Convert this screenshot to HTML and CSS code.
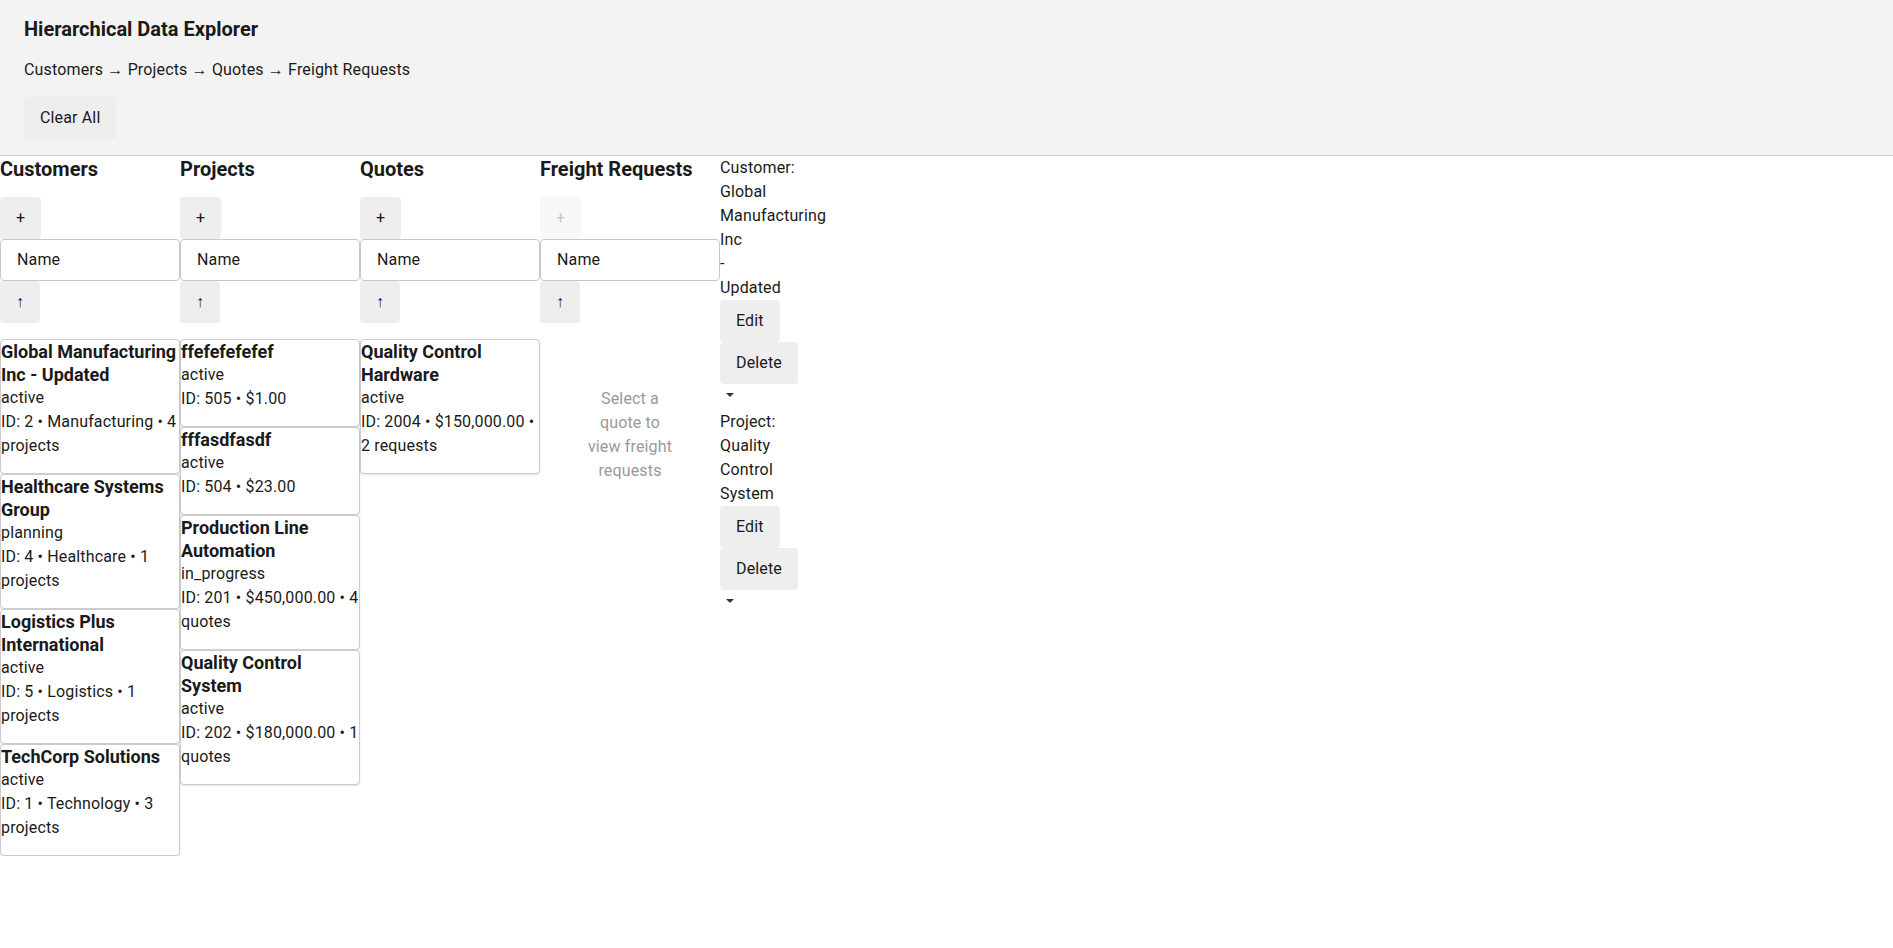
FILE: index.html
```html
<!DOCTYPE html>
<html lang="en">
<head>
<meta charset="utf-8">
<title>Hierarchical Data Explorer</title>
<link rel="stylesheet" href="styles.css">
</head>
<body>
<header class="topbar">
  <h1 class="title">Hierarchical Data Explorer</h1>
  <p class="crumbs">Customers → Projects → Quotes → Freight Requests</p>
  <button class="btn">Clear All</button>
</header>
<main class="explorer">
  <section class="col">
    <h2 class="col-title">Customers</h2>
    <button class="btn">+</button>
    <div class="sort-field">Name</div>
    <button class="btn">↑</button>
    <div class="list">
      <div class="card">
        <div class="card-title">Global Manufacturing Inc - Updated</div>
        <div class="card-line">active</div>
        <div class="card-line">ID: 2 • Manufacturing • 4 projects</div>
      </div>
      <div class="card">
        <div class="card-title">Healthcare Systems Group</div>
        <div class="card-line">planning</div>
        <div class="card-line">ID: 4 • Healthcare • 1 projects</div>
      </div>
      <div class="card">
        <div class="card-title">Logistics Plus International</div>
        <div class="card-line">active</div>
        <div class="card-line">ID: 5 • Logistics • 1 projects</div>
      </div>
      <div class="card">
        <div class="card-title">TechCorp Solutions</div>
        <div class="card-line">active</div>
        <div class="card-line">ID: 1 • Technology • 3 projects</div>
      </div>
    </div>
  </section>
  <section class="col">
    <h2 class="col-title">Projects</h2>
    <button class="btn">+</button>
    <div class="sort-field">Name</div>
    <button class="btn">↑</button>
    <div class="list">
      <div class="card">
        <div class="card-title">ffefefefefef</div>
        <div class="card-line">active</div>
        <div class="card-line">ID: 505 • $1.00</div>
      </div>
      <div class="card">
        <div class="card-title">fffasdfasdf</div>
        <div class="card-line">active</div>
        <div class="card-line">ID: 504 • $23.00</div>
      </div>
      <div class="card">
        <div class="card-title">Production Line Automation</div>
        <div class="card-line">in_progress</div>
        <div class="card-line">ID: 201 • $450,000.00 • 4 quotes</div>
      </div>
      <div class="card">
        <div class="card-title">Quality Control System</div>
        <div class="card-line">active</div>
        <div class="card-line">ID: 202 • $180,000.00 • 1 quotes</div>
      </div>
    </div>
  </section>
  <section class="col">
    <h2 class="col-title">Quotes</h2>
    <button class="btn">+</button>
    <div class="sort-field">Name</div>
    <button class="btn">↑</button>
    <div class="list">
      <div class="card">
        <div class="card-title">Quality Control Hardware</div>
        <div class="card-line">active</div>
        <div class="card-line">ID: 2004 • $150,000.00 • 2 requests</div>
      </div>
    </div>
  </section>
  <section class="col">
    <h2 class="col-title">Freight Requests</h2>
    <button class="btn" disabled>+</button>
    <div class="sort-field">Name</div>
    <button class="btn">↑</button>
    <div class="list">
      <div class="empty">Select a quote to view freight requests</div>
    </div>
  </section>
  <aside class="details">
    <div class="detail">
      <div class="detail-label">Customer: Global Manufacturing Inc - Updated</div>
      <button class="btn">Edit</button>
      <button class="btn">Delete</button>
      <div class="caret"><svg width="8" height="4" viewBox="0 0 8 4"><path d="M0 0H8L4 4Z" fill="#333"/></svg></div>
    </div>
    <div class="detail">
      <div class="detail-label">Project: Quality Control System</div>
      <button class="btn">Edit</button>
      <button class="btn">Delete</button>
      <div class="caret"><svg width="8" height="4" viewBox="0 0 8 4"><path d="M0 0H8L4 4Z" fill="#333"/></svg></div>
    </div>
  </aside>
</main>
</body>
</html>
```

FILE: styles.css
```css
html, body {
  margin: 0;
  padding: 0;
  background: #ffffff;
}

body {
  font-family: Roboto, "Liberation Sans", sans-serif;
  font-size: 16px;
  line-height: 24px;
  letter-spacing: 0.15px;
  color: #1a1a1a;
}

.topbar {
  background: #f3f3f3;
  padding: 16px 24px 16px;
  border-bottom: 1px solid #cccccc;
  display: flex;
  flex-direction: column;
  align-items: flex-start;
}

.title {
  margin: 0 0 16px;
  font-size: 20px;
  line-height: 26px;
  font-weight: 700;
  letter-spacing: 0;
}

.crumbs {
  margin: 0 0 15px;
  font-size: 16px;
  line-height: 24px;
}

.btn {
  font-family: Roboto, "Liberation Sans", sans-serif;
  font-size: 16px;
  line-height: 18px;
  letter-spacing: 0.15px;
  padding: 12px 16px;
  border: none;
  border-radius: 4px;
  background: #eeeeee;
  color: #1a1a1a;
  cursor: pointer;
}

.btn:disabled {
  background: #f8f8f8;
  color: #c4c4c4;
  cursor: default;
}

.explorer {
  display: flex;
  align-items: flex-start;
}

.col {
  width: 180px;
  flex: 0 0 180px;
  display: flex;
  flex-direction: column;
  align-items: flex-start;
}

.col-title {
  margin: 0 0 15px;
  font-size: 20px;
  line-height: 26px;
  font-weight: 700;
  letter-spacing: 0;
}

.sort-field {
  align-self: stretch;
  box-sizing: border-box;
  height: 42px;
  padding: 0 16px;
  border: 1px solid #c8c8c8;
  border-radius: 4px;
  background: #ffffff;
  display: flex;
  align-items: center;
}

.list {
  align-self: stretch;
  margin-top: 16px;
  display: flex;
  flex-direction: column;
}

.card {
  border: 1px solid #cccccc;
  border-radius: 4px;
  box-shadow: 0 1px 2px rgba(0, 0, 0, 0.12);
  padding: 0 0 15px;
  background: #ffffff;
}

.card-title {
  font-size: 18px;
  line-height: 23px;
  font-weight: 700;
  letter-spacing: 0;
}

.card-line {
  font-size: 16px;
  line-height: 24px;
}

.empty {
  padding: 48px 44px;
  text-align: center;
  color: #999999;
}

.details {
  width: min-content;
  display: flex;
  flex-direction: column;
  align-items: flex-start;
}

.detail {
  display: flex;
  flex-direction: column;
  align-items: flex-start;
}

.detail-label {
  word-spacing: 200px;
}

.caret {
  height: 26px;
  padding-left: 6px;
  box-sizing: border-box;
  padding-top: 8px;
  line-height: 0;
}
```
